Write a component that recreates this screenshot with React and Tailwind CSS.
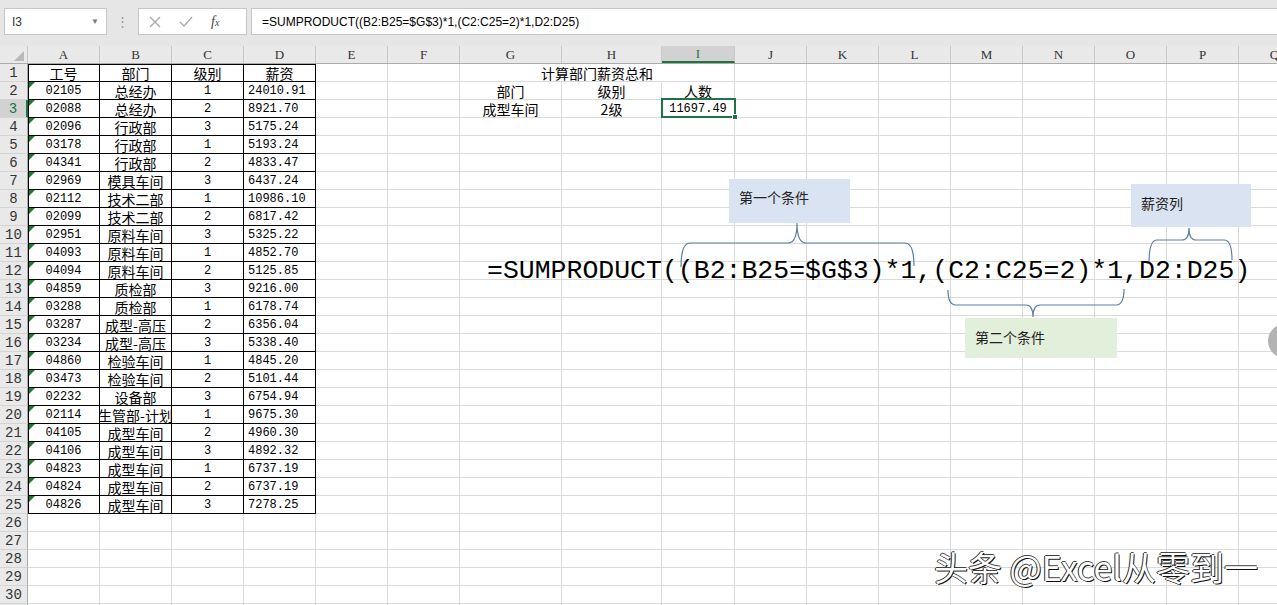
import React from "react";

const cjk = "font-['Noto_Sans_CJK_SC',sans-serif]";
const mono = "font-['Liberation_Mono','Noto_Sans_CJK_SC',monospace]";

const cols = [
  { k: "A", w: "w-[72px]" },
  { k: "B", w: "w-[72px]" },
  { k: "C", w: "w-[72px]" },
  { k: "D", w: "w-[72px]" },
  { k: "E", w: "w-[72px]" },
  { k: "F", w: "w-[72px]" },
  { k: "G", w: "w-[102px]" },
  { k: "H", w: "w-[100px]" },
  { k: "I", w: "w-[73px]" },
  { k: "J", w: "w-[72px]" },
  { k: "K", w: "w-[72px]" },
  { k: "L", w: "w-[72px]" },
  { k: "M", w: "w-[72px]" },
  { k: "N", w: "w-[72px]" },
  { k: "O", w: "w-[72px]" },
  { k: "P", w: "w-[72px]" },
  { k: "Q", w: "w-[72px]" },
];

const data = [
  ["02105", "总经办", "1", "24010.91"],
  ["02088", "总经办", "2", "8921.70"],
  ["02096", "行政部", "3", "5175.24"],
  ["03178", "行政部", "1", "5193.24"],
  ["04341", "行政部", "2", "4833.47"],
  ["02969", "模具车间", "3", "6437.24"],
  ["02112", "技术二部", "1", "10986.10"],
  ["02099", "技术二部", "2", "6817.42"],
  ["02951", "原料车间", "3", "5325.22"],
  ["04093", "原料车间", "1", "4852.70"],
  ["04094", "原料车间", "2", "5125.85"],
  ["04859", "质检部", "3", "9216.00"],
  ["03288", "质检部", "1", "6178.74"],
  ["03287", "成型-高压", "2", "6356.04"],
  ["03234", "成型-高压", "3", "5338.40"],
  ["04860", "检验车间", "1", "4845.20"],
  ["03473", "检验车间", "2", "5101.44"],
  ["02232", "设备部", "3", "6754.94"],
  ["02114", "生管部-计划", "1", "9675.30"],
  ["04105", "成型车间", "2", "4960.30"],
  ["04106", "成型车间", "3", "4892.32"],
  ["04823", "成型车间", "1", "6737.19"],
  ["04824", "成型车间", "2", "6737.19"],
  ["04826", "成型车间", "3", "7278.25"],
];

const headers = ["工号", "部门", "级别", "薪资"];
const sideTable = {
  2: ["部门", "级别", "人数"],
  3: ["成型车间", "2级", "11697.49"],
};

function Cell({ r, c, w }) {
  const inTable = r <= 25 && c <= 3;
  let border = inTable ? "border-black" : "border-[#dadada]";
  let shadow = "";
  if (inTable && c === 0 && r === 1) shadow = "shadow-[inset_1px_1px_0_#000]";
  else if (inTable && c === 0) shadow = "shadow-[inset_1px_0_0_#000]";
  else if (inTable && r === 1) shadow = "shadow-[inset_0_1px_0_#000]";

  let content = null;
  let align = "justify-center";
  let font = cjk + " text-[14px]";
  let tri = false;

  if (r === 1 && c <= 3) content = headers[c];
  if (r >= 2 && r <= 25 && c <= 3) {
    const row = data[r - 2];
    content = row[c];
    if (c === 0) {
      font = mono + " text-[12px]";
      tri = true;
    }
    if (c === 2) font = mono + " text-[12px]";
    if (c === 3) {
      font = mono + " text-[12px]";
      align = "justify-start pl-[4px]";
    }
  }
  if (sideTable[r] && c >= 6 && c <= 8) {
    content = sideTable[r][c - 6];
    if (r === 3 && c === 8) font = mono + " text-[12px]";
  }

  return (
    <div
      className={`relative ${w} h-[18px] shrink-0 box-border border-r border-b ${border} ${shadow} flex items-center ${align} overflow-hidden whitespace-nowrap leading-[16px] text-black ${font}`}
    >
      {tri && (
        <span className="absolute top-0 left-[1px] w-0 h-0 border-t-[6px] border-t-[#1d7a35] border-r-[6px] border-r-transparent" />
      )}
      {content}
    </div>
  );
}

function Row({ r }) {
  const selected = r === 3;
  return (
    <div className="flex">
      <div
        className={`w-[28px] h-[18px] shrink-0 box-border border-b border-[#d4d4d4] flex items-center justify-center font-['Liberation_Mono',monospace] text-[14px] leading-[16px] ${
          selected
            ? "bg-[#d2d2d2] text-[#217346] border-r-2 border-r-[#217346]"
            : "bg-[#e9e9e9] text-[#333] border-r border-r-[#ababab]"
        }`}
      >
        {r}
      </div>
      {r === 1 ? (
        <>
          {cols.slice(0, 6).map((col, c) => (
            <Cell key={col.k} r={r} c={c} w={col.w} />
          ))}
          <div
            className={`w-[275px] h-[18px] shrink-0 box-border border-r border-b border-[#dadada] flex items-center justify-center text-[14px] leading-[16px] text-black ${cjk}`}
          >
            计算部门薪资总和
          </div>
          {cols.slice(9).map((col, c) => (
            <Cell key={col.k} r={r} c={c + 9} w={col.w} />
          ))}
        </>
      ) : (
        cols.map((col, c) => <Cell key={col.k} r={r} c={c} w={col.w} />)
      )}
    </div>
  );
}

function Brace({ d }) {
  return <path d={d} fill="none" stroke="#5b7ea6" strokeWidth="1.2" />;
}

export default function App() {
  const rows = Array.from({ length: 31 }, (_, i) => i + 1);

  return (
    <div className="relative w-[1277px] h-[605px] overflow-hidden bg-white select-none">
      {/* toolbar */}
      <div className="h-[46px] bg-[#e6e6e6] flex items-start pt-[8px] pl-[4px] gap-0">
        <div className="w-[103px] h-[27px] bg-white border border-[#c6c6c6] flex items-center justify-between px-[7px] font-['Liberation_Sans',sans-serif] text-[12px] text-[#333]">
          <span>I3</span>
          <span className="text-[8px] text-[#777]">▼</span>
        </div>
        <div className="w-[31px] h-[27px] flex items-center justify-center text-[#999] text-[13px]">⋮</div>
        <div className="w-[109px] h-[27px] bg-white border border-[#c6c6c6] flex items-center gap-[18px] pl-[10px] text-[#9a9a9a]">
          <svg width="12" height="12" viewBox="0 0 12 12">
            <path d="M1 1L11 11M11 1L1 11" stroke="#a8a8a8" strokeWidth="1.3" />
          </svg>
          <svg width="14" height="12" viewBox="0 0 14 12">
            <path d="M1 6L5 10L13 1" fill="none" stroke="#a8a8a8" strokeWidth="1.3" />
          </svg>
          <span className="font-['Liberation_Serif',serif] italic text-[14px] text-[#444]">
            f<span className="text-[10px]">x</span>
          </span>
        </div>
        <div className="flex-1 h-[27px] ml-[4px] bg-white border border-[#c6c6c6] border-r-0 flex items-center pl-[10px] font-['Liberation_Sans',sans-serif] text-[12px] text-black">
          =SUMPRODUCT((B2:B25=$G$3)*1,(C2:C25=2)*1,D2:D25)
        </div>
      </div>

      {/* column header */}
      <div className="flex h-[17px] bg-[#e9e9e9] border-b border-[#ababab] box-content">
        <div className="relative w-[28px] h-[17px] shrink-0 border-r border-[#c8c8c8] box-border">
          <span className="absolute right-[3px] bottom-[2px] w-0 h-0 border-l-[10px] border-l-transparent border-b-[10px] border-b-[#b9b9b9]" />
        </div>
        {cols.map((col) => (
          <div
            key={col.k}
            className={`${col.w} h-[17px] shrink-0 box-border border-r border-[#c8c8c8] flex items-center justify-center font-['Liberation_Serif',serif] text-[13px] leading-[15px] ${
              col.k === "I"
                ? "bg-[#d2d2d2] text-[#217346] border-b-2 border-b-[#217346]"
                : "text-[#333]"
            }`}
          >
            {col.k}
          </div>
        ))}
      </div>

      {/* grid */}
      <div className="flex flex-col">
        {rows.map((r) => (
          <Row key={r} r={r} />
        ))}
      </div>

      {/* active cell I3 */}
      <div className="absolute left-[661px] top-[98px] w-[75px] h-[20px] border-2 border-[#217346] pointer-events-none" />
      <div className="absolute left-[732px] top-[114px] w-[6px] h-[6px] bg-[#217346] border border-white" />

      {/* callout boxes */}
      <div className={`absolute left-[729px] top-[179px] w-[121px] h-[44px] bg-[#dae3f1] pl-[10px] pt-[8px] text-[14px] leading-[20px] text-[#222] ${cjk}`}>
        第一个条件
      </div>
      <div className={`absolute left-[1131px] top-[184px] w-[120px] h-[43px] bg-[#dae3f1] pl-[10px] pt-[9px] text-[14px] leading-[20px] text-[#222] ${cjk}`}>
        薪资列
      </div>
      <div className={`absolute left-[965px] top-[318px] w-[152px] h-[40px] bg-[#e2efda] pl-[10px] pt-[9px] text-[14px] leading-[20px] text-[#222] ${cjk}`}>
        第二个条件
      </div>

      {/* braces */}
      <svg className="absolute left-0 top-0 pointer-events-none" width="1277" height="605">
        <Brace d="M681 267 Q681 243 690 243 L788 243 Q797 243 797 223 Q797 243 806 243 L905 243 Q914 243 914 266" />
        <Brace d="M1149 263 Q1149 240 1157 240 L1182 240 Q1189 240 1189 228 Q1189 240 1196 240 L1224 240 Q1232 240 1232 260" />
        <Brace d="M948 290 Q948 305 956 305 L1026 305 Q1033 305 1033 317 Q1033 305 1040 305 L1116 305 Q1124 305 1124 289" />
      </svg>

      {/* formula text */}
      <div className="absolute left-[487px] top-[256px] font-['Liberation_Mono',monospace] text-[26.5px] leading-[30px] text-black whitespace-nowrap">
        =SUMPRODUCT((B2:B25=$G$3)*1,(C2:C25=2)*1,D2:D25)
      </div>

      {/* scroll circle */}
      <div className="absolute left-[1268px] top-[324px] w-[34px] h-[34px] rounded-full bg-[#b3b3b3]" />

      {/* watermark */}
      <div
        className={`absolute left-[934px] top-[545px] text-[34px] leading-[44px] text-white whitespace-nowrap ${cjk} [text-shadow:1px_1px_0_#111,-1px_0_0_#222,0_-1px_0_#444]`}
      >
        头条 @Excel从零到一
      </div>
    </div>
  );
}
